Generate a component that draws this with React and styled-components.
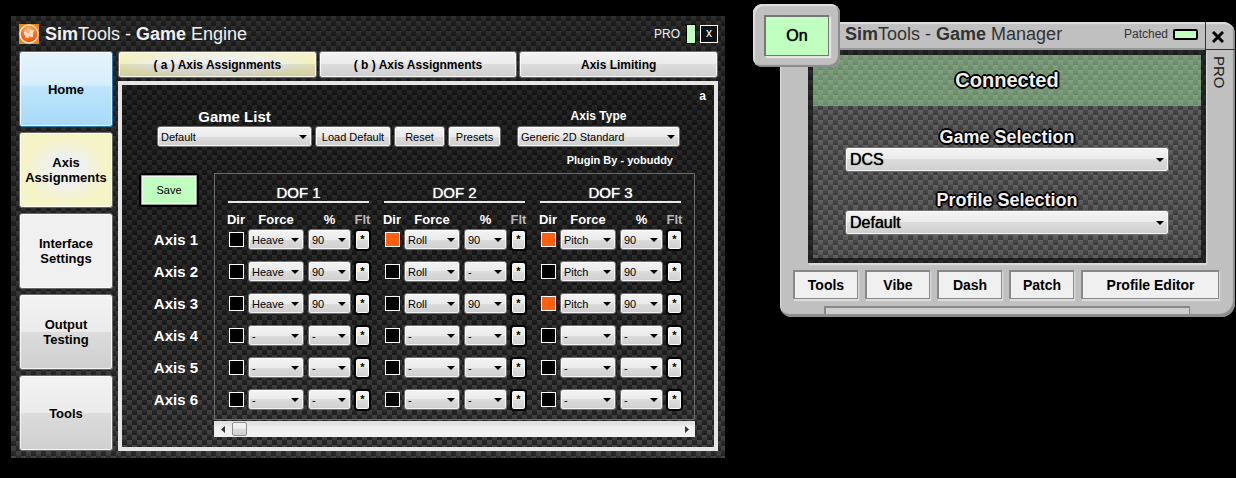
import React, { useState } from "react";
import styled, { createGlobalStyle, css } from "styled-components";

const GlobalStyle = createGlobalStyle`
  * {
    box-sizing: border-box;
  }
  body {
    margin: 0;
    background-color: #000;
    font-family: "Liberation Sans", Arial, sans-serif;
  }
  button, select, input {
    font-family: inherit;
    margin: 0;
  }
`;

const carbon = (light, dark, tint) => css`
  background-image: ${tint},
    linear-gradient(rgba(255, 255, 255, 0.04), rgba(0, 0, 0, 0.1)),
    conic-gradient(${dark} 25%, ${light} 0 50%, ${dark} 0 75%, ${light} 0);
  background-size: auto, 10px 5px, 10px 10px;
`;

const glossy = "linear-gradient(#f3f3f3, #ebebeb 50%, #dcdcdc 50%, #cfcfcf)";

const outline = css`
  text-shadow: -1px -1px 0 #000, 1px -1px 0 #000, -1px 1px 0 #000,
    1px 1px 0 #000, 2px 0 0 #000, -2px 0 0 #000, 0 2px 0 #000, 0 -2px 0 #000;
`;

const Page = styled.div`
  display: flex;
  align-items: flex-start;
  gap: 55px;
  padding: 4px 1px 0 11px;
`;

/* ---------- game engine ---------- */

const Engine = styled.section`
  flex: 699;
  min-width: 0;
  margin-top: 12px;
  padding: 0 7px 7px 8px;
  ${carbon(
    "#3e3e3e",
    "#262626",
    "linear-gradient(rgba(0, 0, 0, 0.3), rgba(0, 0, 0, 0.2) 60%, rgba(0, 0, 0, 0))"
  )};
`;

const Header = styled.header`
  display: flex;
  align-items: center;
  height: 35px;
  gap: 6px;
`;

const Title = styled.h1`
  flex: 1;
  margin: 0;
  font-size: 18px;
  line-height: 20px;
  font-weight: 400;
  white-space: nowrap;
  color: ${(props) => props.color};
`;

const Pro = styled.span`
  font-size: 12px;
  color: #f0f0f0;
`;

const Status = styled.span`
  width: ${(props) => (props.wide ? "25px" : "10px")};
  height: ${(props) => (props.wide ? "11px" : "20px")};
  border: ${(props) => (props.wide ? "2px" : "1px")} solid #000;
  border-radius: ${(props) => (props.wide ? "2px" : "0")};
  background-color: #c0ffc0;
`;

const CloseBox = styled.button`
  width: 18px;
  height: 18px;
  margin-left: -2px;
  padding: 0 0 2px;
  border: 1px solid #fff;
  background-color: #111;
  color: #fff;
  font-size: 12px;
  line-height: 14px;
`;

const Body = styled.div`
  display: flex;
  gap: 5px;
`;

const Nav = styled.nav`
  display: flex;
  flex-direction: column;
  gap: 5px;
  width: 94px;
`;

const fills = {
  blue: "linear-gradient(#e6f4fc, #d6eefb 45%, #bee6fd 46%, #a7d9f5)",
  yellow: "radial-gradient(closest-side, #f0f0f0 35%, #f5f4c6 90%)",
  yellowGloss:
    "linear-gradient(rgba(255, 255, 255, 0.2), rgba(255, 255, 255, 0) 50%, rgba(0, 0, 0, 0.08) 50%, rgba(0, 0, 0, 0.14)), radial-gradient(closest-side, #eee 60%, #f3f1bd)",
  flat: "linear-gradient(#f0f0f0, #f0f0f0)",
  gloss: glossy,
};

const Glossy = styled.button`
  padding: 0;
  border: 1px solid ${(props) => (props.fill === "blue" ? "#2c79b0" : "#6a6a6a")};
  border-radius: 3px;
  background-image: ${(props) => fills[props.fill || "gloss"]};
  box-shadow: inset 0 0 0 1px rgba(255, 255, 255, 0.75);
  color: #000;
`;

const NavButton = styled(Glossy)`
  height: 76px;
  padding: 0 4px;
  font-size: 13px;
  line-height: 15px;
  font-weight: 700;
`;

const Main = styled.main`
  flex: 1;
  min-width: 0;
  display: flex;
  flex-direction: column;
  gap: 3px;
`;

const Tabs = styled.div`
  display: grid;
  grid-template-columns: repeat(3, 1fr);
  gap: 2px;
`;

const Tab = styled(Glossy)`
  height: 27px;
  font-size: 12px;
  font-weight: 700;
`;

const Panel = styled.div`
  flex: 1;
  border: 4px solid #e6e4e4;
  color: #fff;
  ${carbon(
    "#404040",
    "#222",
    "linear-gradient(rgba(0, 0, 0, 0.45), rgba(0, 0, 0, 0.35) 55%, rgba(0, 0, 0, 0))"
  )};
`;

const Letter = styled.div`
  padding-right: 8px;
  font-size: 12px;
  line-height: 22px;
  font-weight: 700;
  text-align: right;
`;

const Toolbar = styled.div`
  display: flex;
  align-items: flex-end;
  gap: 3px;
  padding: 0 34px 0 35px;
`;

const Field = styled.label`
  flex: ${(props) => props.grow};
  min-width: 0;
  margin-left: ${(props) => props.space || "0"};
  font-size: ${(props) => props.size};
  line-height: 19px;
  font-weight: 700;
  text-align: center;
`;

const SelectBox = styled.span`
  position: relative;
  display: block;
  min-width: 0;

  &::after {
    content: "";
    position: absolute;
    right: 5px;
    top: 50%;
    border: 4px solid transparent;
    border-top-color: #000;
    border-bottom: 0;
    transform: translateY(-50%);
    pointer-events: none;
  }
`;

const StyledSelect = styled.select`
  appearance: none;
  display: block;
  width: 100%;
  height: ${(props) => (props.$large ? "25px" : "21px")};
  padding: ${(props) => (props.$large ? "0 4px" : "0 3px")};
  border: 1px solid #707070;
  border-radius: 3px;
  background-image: ${glossy};
  box-shadow: inset 0 0 0 1px rgba(255, 255, 255, 0.75);
  color: #000;
  font-size: ${(props) => (props.$large ? "16px" : "11px")};
  text-shadow: ${(props) => (props.$large ? "0 0 1px #000" : "none")};
`;

const ToolButton = styled(Glossy)`
  width: ${(props) => props.width};
  height: 21px;
  font-size: 11px;
`;

const Plugin = styled.div`
  padding-right: 41px;
  font-size: 11px;
  line-height: 26px;
  font-weight: 700;
  text-align: right;
`;

const Assignments = styled.div`
  display: flex;
  padding-right: 19px;
  padding-bottom: 10px;
`;

const Side = styled.div`
  width: 92px;
  padding-right: 16px;
  display: flex;
  flex-direction: column;
  align-items: flex-end;
  gap: 11px;
`;

const SaveButton = styled.button`
  width: 60px;
  height: 34px;
  margin: 0 -1px 11px 0;
  padding: 0;
  border: 2px solid #000;
  border-radius: 3px;
  background-color: #c0ffc0;
  box-shadow: inset 0 0 0 1px #9a9a9a, inset 0 0 0 2px #f4f4f4;
  color: #000;
  font-size: 11px;
`;

const AxisLabel = styled.div`
  font-size: 15px;
  line-height: 21px;
  font-weight: 700;
`;

const Scroller = styled.div`
  flex: 1;
  min-width: 0;
`;

const Dofs = styled.div`
  display: grid;
  grid-template-columns: repeat(3, 1fr);
  gap: 13px;
  padding: 10px 11px 9px 13px;
  border: 1px solid #6c6c6c;
  margin-bottom: 1px;
`;

const DofTitle = styled.h2`
  margin: 0 2px 0 0;
  border-bottom: 2px solid #e8e8e8;
  font-size: 15px;
  line-height: 17px;
  font-weight: 400;
  text-align: center;
  text-shadow: 0 0 1px #fff;
`;

const DofGrid = styled.div`
  display: grid;
  grid-template-columns: 16px 1fr 43px 15px;
  grid-auto-rows: 21px;
  align-items: center;
  column-gap: 4px;
  row-gap: 11px;
  padding-right: 1px;
`;

const DofHead = styled(DofGrid)`
  grid-auto-rows: 26px;
`;

const HeadText = styled.span`
  display: flex;
  justify-content: center;
  padding-top: 8px;
  font-size: 13px;
  line-height: 18px;
  font-weight: 700;
  color: ${(props) => (props.dim ? "#b8b8b8" : "#fff")};
`;

const Direction = styled.input`
  appearance: none;
  width: 15px;
  height: 15px;
  border: 1px solid #fff;
  background-color: #000;
  justify-self: center;

  &:checked {
    background-color: #ff6010;
  }
`;

const FilterButton = styled(Glossy)`
  height: 20px;
  border: 1px solid #000;
  box-shadow: inset 0 0 0 1px #fff, 0 0 0 1px #000;
  font-size: 11px;
  line-height: 13px;
  font-weight: 700;
`;

const ScrollBar = styled.div`
  display: flex;
  height: 16px;
  background-image: linear-gradient(#dcdcdc, #eee 40%, #f2f2f2);
`;

const ScrollArrow = styled.button`
  width: 17px;
  padding: 0;
  border: 0;
  background: none;
  display: flex;
  align-items: center;
  justify-content: center;
`;

const Thumb = styled.div`
  width: 15px;
  height: 14px;
  margin: 1px auto 1px 1px;
  border: 1px solid #8f8f8f;
  border-radius: 2px;
  background-image: ${glossy};
`;

/* ---------- game manager ---------- */

const Manager = styled.section`
  position: relative;
  flex: 455;
  min-width: 0;
  margin-top: 18px;
  padding-bottom: 3px;
  border-radius: 0 12px 14px 12px;
  background-color: #c0c0c0;
  box-shadow: inset 1px 2px 1px #dedede, inset -2px -3px 1px #8c8c8c;
`;

const Power = styled.div`
  position: absolute;
  left: -27px;
  top: -18px;
  width: 87px;
  height: 63px;
  padding: 11px;
  border-radius: 9px;
  background-color: #c0c0c0;
  box-shadow: inset 2px 2px 1px #dedede, inset -2px -2px 1px #8c8c8c;
`;

const PowerButton = styled.button`
  width: 100%;
  height: 100%;
  border: 1px solid #777;
  border-width: 2px 1px 1px 2px;
  background-color: #c0ffc0;
  box-shadow: 2px 2px 1px #e4e4e4;
  color: #000;
  font-size: 16px;
  text-shadow: 0 0 1px #000;
`;

const ManagerTop = styled.header`
  display: flex;
  height: 28px;
`;

const ManagerBar = styled.div`
  flex: 1;
  display: flex;
  align-items: center;
  gap: 5px;
  padding: 0 7px 2px 65px;
  border-bottom: 2px solid #999;
`;

const Patched = styled.span`
  font-size: 12px;
  color: #333;
`;

const CloseButton = styled.button`
  width: 30px;
  padding: 2px 5px 0 0;
  border: solid #333;
  border-width: 0 0 1px 1px;
  background: none;
  display: flex;
  align-items: center;
  justify-content: center;
`;

const ManagerBody = styled.div`
  display: flex;
  padding-left: 28px;
`;

const Screen = styled.div`
  flex: 1;
  min-width: 0;
  padding: 5px 5px 28px;
  ${carbon(
    "#626262",
    "#454545",
    "linear-gradient(rgba(0, 0, 0, 0.05), rgba(0, 0, 0, 0.05))"
  )};
  box-shadow: inset 0 0 0 5px rgba(0, 0, 0, 0.55), 1px 2px 1px #dadada;
`;

const Connected = styled.div`
  font-size: 20px;
  line-height: 51px;
  margin-bottom: 21px;
  font-weight: 700;
  color: #f0f0f0;
  text-align: center;
  ${outline};
  ${carbon(
    "#84a584",
    "#719271",
    "linear-gradient(rgba(112, 150, 112, 0.3), rgba(112, 150, 112, 0.3))"
  )};
`;

const Selection = styled.label`
  display: block;
  padding: 0 32px;
  margin-bottom: 18px;
  font-size: 18px;
  line-height: 20px;
  font-weight: 700;
  color: #f0f0f0;
  text-align: center;

  &:last-child {
    margin-bottom: 0;
  }
`;

const SelectionText = styled.span`
  ${outline};
`;

const SideStrip = styled.aside`
  width: 29px;
  padding: 6px 7px 0 0;
  font-size: 15px;
  line-height: 17px;
  color: #222;
  writing-mode: vertical-rl;
`;

const Actions = styled.footer`
  display: grid;
  grid-template-columns: repeat(4, 65fr) 138fr;
  gap: 7px;
  padding: 7px 16px 7px 13px;
`;

const Action = styled.button`
  min-width: 0;
  height: 29px;
  padding: 0;
  border: 1px solid #888;
  border-width: 2px 1px 1px 2px;
  background-color: #f0f0f0;
  box-shadow: 1px 2px 1px #dcdcdc;
  color: #000;
  font-size: 14px;
  font-weight: 700;
`;

const Groove = styled.div`
  height: 8px;
  margin: 0 45px 0 44px;
  border: solid #888;
  border-width: 2px 1px 0 2px;
  background-color: #cecece;
`;

const Logo = () => (
  <svg width="20" height="20" viewBox="0 0 20 20" aria-hidden="true">
    <defs>
      <radialGradient id="glow" cx="50%" cy="30%" r="70%">
        <stop offset="0" stopColor="#ffc07a" />
        <stop offset="0.6" stopColor="#ff6a1c" />
        <stop offset="1" stopColor="#f04a08" />
      </radialGradient>
    </defs>
    <rect width="20" height="20" fill="#e88a10" />
    <circle cx="10" cy="10" r="9" fill="url(#glow)" stroke="#f6e6d4" strokeWidth="1.5" />
    <path
      d="M5 7l2-1 1 3h2V8h1V6h4v2h-1v5h-3v-1h-1v2H6v-3H5z"
      fill="#ffe9d8"
      opacity="0.85"
    />
  </svg>
);

const Select = ({ value, label, large }) => (
  <SelectBox>
    <StyledSelect defaultValue={value} aria-label={label} $large={large}>
      <option>{value}</option>
    </StyledSelect>
  </SelectBox>
);

const axes = [1, 2, 3, 4, 5, 6];

const dofs = [
  { id: 1, force: "Heave", dir: [], percent: ["90", "90", "90"] },
  { id: 2, force: "Roll", dir: [1], percent: ["90", "-", "90"] },
  { id: 3, force: "Pitch", dir: [1, 3], percent: ["90", "90", "90"] },
];

const Dof = ({ dof }) => (
  <div>
    <DofTitle>DOF {dof.id}</DofTitle>
    <DofHead>
      <HeadText>Dir</HeadText>
      <HeadText>Force</HeadText>
      <HeadText>%</HeadText>
      <HeadText dim="true">Flt</HeadText>
    </DofHead>
    <DofGrid>
      {axes.map((axis) => {
        const name = `Axis ${axis} DOF ${dof.id}`;
        return (
          <React.Fragment key={axis}>
            <Direction
              type="checkbox"
              aria-label={`${name} direction`}
              defaultChecked={dof.dir.includes(axis)}
            />
            <Select label={`${name} force`} value={axis < 4 ? dof.force : "-"} />
            <Select label={`${name} percent`} value={dof.percent[axis - 1] || "-"} />
            <FilterButton aria-label={`${name} filter`}>*</FilterButton>
          </React.Fragment>
        );
      })}
    </DofGrid>
  </div>
);

const GameEngine = () => (
  <Engine>
    <Header>
      <Logo />
      <Title color="#f0f0f0">
        <b>Sim</b>Tools - <b>Game</b> Engine
      </Title>
      <Pro>PRO</Pro>
      <Status />
      <CloseBox aria-label="Close engine">x</CloseBox>
    </Header>
    <Body>
      <Nav>
        <NavButton fill="blue">Home</NavButton>
        <NavButton fill="yellow">Axis Assignments</NavButton>
        <NavButton fill="flat">Interface Settings</NavButton>
        <NavButton>Output Testing</NavButton>
        <NavButton>Tools</NavButton>
      </Nav>
      <Main>
        <Tabs>
          <Tab fill="yellowGloss">( a ) Axis Assignments</Tab>
          <Tab>( b ) Axis Assignments</Tab>
          <Tab>Axis Limiting</Tab>
        </Tabs>
        <Panel>
          <Letter>a</Letter>
          <Toolbar>
            <Field grow="155" size="15px">
              Game List
              <Select value="Default" />
            </Field>
            <ToolButton width="76px">Load Default</ToolButton>
            <ToolButton width="51px">Reset</ToolButton>
            <ToolButton width="53px">Presets</ToolButton>
            <Field grow="163" size="12px" space="13px">
              Axis Type
              <Select value="Generic 2D Standard" />
            </Field>
          </Toolbar>
          <Plugin>Plugin By - yobuddy</Plugin>
          <Assignments>
            <Side>
              <SaveButton>Save</SaveButton>
              {axes.map((axis) => (
                <AxisLabel key={axis}>Axis {axis}</AxisLabel>
              ))}
            </Side>
            <Scroller>
              <Dofs>
                {dofs.map((dof) => (
                  <Dof key={dof.id} dof={dof} />
                ))}
              </Dofs>
              <ScrollBar>
                <ScrollArrow aria-label="Scroll left">
                  <svg width="4" height="7" viewBox="0 0 4 7">
                    <path d="M4 0v7L0 3.5z" fill="#333" />
                  </svg>
                </ScrollArrow>
                <Thumb />
                <ScrollArrow aria-label="Scroll right">
                  <svg width="4" height="7" viewBox="0 0 4 7">
                    <path d="M0 0v7l4-3.5z" fill="#333" />
                  </svg>
                </ScrollArrow>
              </ScrollBar>
            </Scroller>
          </Assignments>
        </Panel>
      </Main>
    </Body>
  </Engine>
);

const GameManager = () => {
  const [on, setOn] = useState(true);
  return (
    <Manager>
      <ManagerTop>
        <ManagerBar>
          <Title color="#333">
            <b>Sim</b>Tools - <b>Game</b> Manager
          </Title>
          <Patched>Patched</Patched>
          <Status wide="true" />
        </ManagerBar>
        <CloseButton aria-label="Close manager">
          <svg width="12" height="12" viewBox="0 0 12 12">
            <path d="M1 1l10 10M11 1L1 11" stroke="#000" strokeWidth="3" />
          </svg>
        </CloseButton>
      </ManagerTop>
      <ManagerBody>
        <Screen>
          <Connected>Connected</Connected>
          <Selection>
            <SelectionText>Game Selection</SelectionText>
            <Select value="DCS" large />
          </Selection>
          <Selection>
            <SelectionText>Profile Selection</SelectionText>
            <Select value="Default" large />
          </Selection>
        </Screen>
        <SideStrip>PRO</SideStrip>
      </ManagerBody>
      <Actions>
        <Action>Tools</Action>
        <Action>Vibe</Action>
        <Action>Dash</Action>
        <Action>Patch</Action>
        <Action>Profile Editor</Action>
      </Actions>
      <Groove />
      <Power>
        <PowerButton onClick={() => setOn(!on)}>{on ? "On" : "Off"}</PowerButton>
      </Power>
    </Manager>
  );
};

const App = () => {
  return (
    <>
      <GlobalStyle />
      <Page>
        <GameEngine />
        <GameManager />
      </Page>
    </>
  );
};

export default App;
